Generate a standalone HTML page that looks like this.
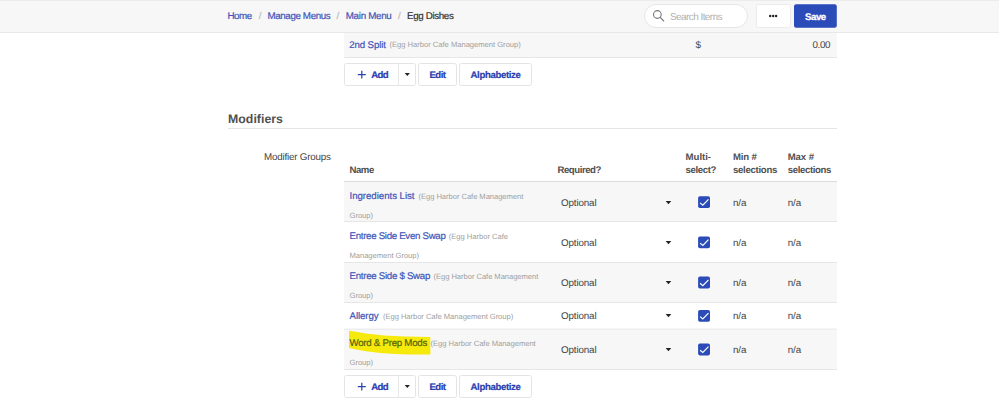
<!DOCTYPE html>
<html><head><meta charset="utf-8">
<style>
*{box-sizing:border-box;margin:0;padding:0}
html,body{width:999px;height:413px;overflow:hidden;background:#fff}
body{font-family:"Liberation Sans",sans-serif;position:relative;color:#444;text-rendering:geometricPrecision}
.a{position:absolute;white-space:nowrap;line-height:1}
.hdr{left:0;top:0;width:999px;height:33px;background:#f7f7f7;border-bottom:1px solid #e8e8e8;border-top:1px solid #ececec}
.bc{font-size:9.8px;top:11.8px;color:#4155b8;-webkit-text-stroke:0.2px currentColor}
.sep{color:#bbb}
.btn{background:#fff;border:1px solid #e4e4e4;border-radius:2.5px}
.bt{font-size:9.6px;font-weight:bold;color:#2b40b0;-webkit-text-stroke:0.2px currentColor}
.lnk{font-size:9.7px;color:#4155b8;-webkit-text-stroke:0.2px currentColor}
.sm{font-size:7.6px;color:#a0a0a0}
.th{font-size:9.6px;font-weight:bold;color:#505050}
.td{font-size:9.8px;color:#444}
.row{left:344px;width:493px;border-bottom:1px solid #e6e6e6}
.g{background:#f7f7f7}
.cb{left:698px}
.car{width:0;height:0;border-left:2.5px solid transparent;border-right:2.5px solid transparent;border-top:3px solid #2a2a2a}
</style></head><body>
<div class="a hdr"></div>
<span class="a bc" id="b1" style="letter-spacing:-0.461px;left:227.5px">Home</span>
<span class="a bc sep" style="left:258.7px">/</span>
<span class="a bc" id="b2" style="letter-spacing:-0.395px;left:267.5px">Manage Menus</span>
<span class="a bc sep" style="left:336.5px">/</span>
<span class="a bc" id="b3" style="letter-spacing:-0.302px;left:345.75px">Main Menu</span>
<span class="a bc sep" style="left:398px">/</span>
<span class="a bc" id="b4" style="letter-spacing:-0.361px;left:407px;color:#333">Egg Dishes</span>

<div class="a" style="left:643.5px;top:4px;width:104px;height:24px;background:#fff;border:1px solid #e6e6e6;border-radius:12px"></div>
<svg class="a" style="left:650px;top:8px" width="16" height="16" viewBox="0 0 16 16"><circle cx="7.35" cy="6.5" r="3.85" fill="none" stroke="#777" stroke-width="1.1"/><path d="M10.1 9.3 L13.7 12.9" stroke="#777" stroke-width="1.2" stroke-linecap="round"/></svg>
<span class="a" id="si" style="letter-spacing:-0.577px;left:670px;top:12.5px;font-size:10px;color:#b0b0b0">Search Items</span>
<div class="a btn" style="left:756px;top:4px;width:35px;height:24px;border-color:#ebebeb"></div>
<svg class="a" style="left:764px;top:10px" width="20" height="12" viewBox="0 0 20 12"><circle cx="6.2" cy="6" r="1.2" fill="#222"/><circle cx="9.15" cy="6" r="1.2" fill="#222"/><circle cx="12.1" cy="6" r="1.2" fill="#222"/></svg>
<svg class="a" style="left:790px;top:0" width="50" height="32"><rect x="4" y="4.3" width="42.8" height="23.5" rx="2.2" fill="#2b4bb8"/></svg>
<span class="a" id="sv" style="letter-spacing:-0.418px;left:805px;top:13.2px;font-size:9.6px;font-weight:bold;color:#fff;-webkit-text-stroke:0.3px #fff">Save</span>

<!-- 2nd split row -->
<div class="a row g" style="top:33px;height:25px"></div>
<span class="a lnk" id="r0" style="letter-spacing:-0.141px;left:349.3px;top:40.5px">2nd Split</span>
<span class="a sm" id="r0s" style="letter-spacing:-0.012px;left:389.5px;top:41.3px">(Egg Harbor Cafe Management Group)</span>
<span class="a td" id="dl" style="letter-spacing:-0.453px;left:695.5px;top:41.1px">$</span>
<span class="a td" id="am" style="letter-spacing:-0.395px;left:812.5px;top:41.1px">0.00</span>

<!-- buttons 1 -->
<div class="a btn" style="left:344px;top:63px;width:72px;height:23px"></div>
<div class="a" style="left:398px;top:63px;width:1px;height:23px;background:#e8e8e8"></div>
<svg class="a" style="left:356px;top:70.0px" width="12" height="12" viewBox="0 0 12 12"><path d="M5.8 0.65 V8.4 M1.8 4.5 H9.8" stroke="#2b44b4" stroke-width="1.25" fill="none"/></svg>
<span class="a bt" id="a1" style="letter-spacing:-0.635px;left:371.3px;top:70.5px">Add</span>
<svg class="a" style="left:400px;top:70.3px" width="16" height="10" viewBox="0 0 16 10"><path d="M4.7 3 L9.9 3 L7.3 6.1 Z" fill="#222"/></svg>
<div class="a btn" style="left:418px;top:63px;width:39px;height:23px"></div>
<span class="a bt" id="e1" style="letter-spacing:-0.531px;left:429.5px;top:70.5px">Edit</span>
<div class="a btn" style="left:459px;top:63px;width:72.5px;height:23px"></div>
<span class="a bt" id="al1" style="letter-spacing:-0.349px;left:470.5px;top:70.5px">Alphabetize</span>

<!-- Modifiers -->
<span class="a" id="mod" style="letter-spacing:0.038px;left:228px;top:113.3px;font-size:12.3px;font-weight:bold;color:#505050">Modifiers</span>
<div class="a" style="left:228px;top:128px;width:609px;height:1px;background:#e4e4e4"></div>
<span class="a td" id="mg" style="letter-spacing:-0.197px;left:264px;top:153px">Modifier Groups</span>

<!-- table header -->
<span class="a th" id="h1" style="letter-spacing:-0.473px;left:349.5px;top:166.1px">Name</span>
<span class="a th" id="h2" style="letter-spacing:-0.427px;left:557.4px;top:166.1px">Required?</span>
<span class="a th" id="h3a" style="letter-spacing:-0.031px;left:685.6px;top:153.1px">Multi-</span>
<span class="a th" id="h3b" style="letter-spacing:-0.382px;left:685.6px;top:166.1px">select?</span>
<span class="a th" id="h4a" style="letter-spacing:-0.147px;left:733px;top:153.1px">Min #</span>
<span class="a th" id="h4b" style="letter-spacing:-0.292px;left:733px;top:166.1px">selections</span>
<span class="a th" id="h5a" style="letter-spacing:-0.094px;left:787.7px;top:153.1px">Max #</span>
<span class="a th" id="h5b" style="letter-spacing:-0.363px;left:787.7px;top:166.1px">selections</span>
<div class="a" style="left:344px;top:180.5px;width:493px;height:1.5px;background:#dcdcdc"></div>

<!-- rows -->
<div class="a row g" style="top:182px;height:40.3px"></div>
<div class="a row" style="top:222.3px;height:40.3px"></div>
<div class="a row g" style="top:262.5px;height:40.3px"></div>
<div class="a row" style="top:302.8px;height:26.5px;border-bottom:0"></div>
<svg class="a" style="left:344px;top:326px" width="493" height="6"><rect x="0" y="2.65" width="493" height="1" fill="#e4e4e4"/></svg>
<div class="a row g" style="top:329.6px;height:40px"></div>

<svg class="a" style="left:340px;top:322px" width="110" height="44" viewBox="340 322 110 44"><path d="M349 330.8 L356 331.8 L366 333.6 L384 335.6 L405 336.4 L430.3 336.9 L430.4 354.6 L410 354.5 L395 354.1 L380 353.1 L366 351.2 L356 349.4 L349 347.9 Z" fill="#f6ea0c"/></svg>

<span class="a lnk" id="r1" style="letter-spacing:-0.044px;left:349.5px;top:192.0px">Ingredients List</span>
<span class="a sm" id="r1s" style="letter-spacing:-0.044px;left:418.5px;top:192.8px">(Egg Harbor Cafe Management</span>
<span class="a sm" id="r1t" style="letter-spacing:-0.023px;left:349.5px;top:212.0px">Group)</span>

<span class="a lnk" id="r2" style="letter-spacing:-0.301px;left:349.5px;top:232.0px">Entree Side Even Swap</span>
<span class="a sm" id="r2s" style="letter-spacing:-0.017px;left:448.8px;top:232.8px">(Egg Harbor Cafe</span>
<span class="a sm" id="r2t" style="letter-spacing:-0.034px;left:349.5px;top:252.0px">Management Group)</span>

<span class="a lnk" id="r3" style="letter-spacing:-0.285px;left:349.5px;top:272.0px">Entree Side $ Swap</span>
<span class="a sm" id="r3s" style="letter-spacing:-0.044px;left:433.5px;top:272.8px">(Egg Harbor Cafe Management</span>
<span class="a sm" id="r3t" style="letter-spacing:-0.023px;left:349.5px;top:292.0px">Group)</span>

<span class="a lnk" id="r4" style="letter-spacing:-0.074px;left:349.5px;top:312.3px">Allergy</span>
<span class="a sm" id="r4s" style="letter-spacing:-0.046px;left:383px;top:313.1px">(Egg Harbor Cafe Management Group)</span>

<span class="a lnk" id="r5" style="letter-spacing:-0.260px;left:349.5px;top:339.0px;color:#55640c">Word &amp; Prep Mods</span>
<span class="a sm" id="r5s" style="letter-spacing:-0.032px;left:430.6px;top:339.8px">(Egg Harbor Cafe Management</span>
<span class="a sm" id="r5t" style="letter-spacing:-0.023px;left:349.5px;top:358.5px">Group)</span>

<!-- columns per row: centers 201.9, 242.4, 282.6, 316, 349.4 -->
<span class="a td" id="o1" style="letter-spacing:-0.125px;left:561px;top:199.1px">Optional</span>
<span class="a td" id="o2" style="letter-spacing:-0.125px;left:561px;top:239.3px">Optional</span>
<span class="a td" id="o3" style="letter-spacing:-0.125px;left:561px;top:278.6px">Optional</span>
<span class="a td" id="o4" style="letter-spacing:-0.125px;left:561px;top:311.9px">Optional</span>
<span class="a td" id="o5" style="letter-spacing:-0.125px;left:561px;top:346.3px">Optional</span>
<svg class="a" style="left:660px;top:197.6px" width="16" height="10" viewBox="0 0 16 10"><path d="M5.6 3 L11.3 3 L8.45 6.2 Z" fill="#222" stroke="#fff" stroke-opacity="0.7" stroke-width="1.4" paint-order="stroke"/></svg>
<svg class="a" style="left:660px;top:237.8px" width="16" height="10" viewBox="0 0 16 10"><path d="M5.6 3 L11.3 3 L8.45 6.2 Z" fill="#222" stroke="#fff" stroke-opacity="0.7" stroke-width="1.4" paint-order="stroke"/></svg>
<svg class="a" style="left:660px;top:278.0px" width="16" height="10" viewBox="0 0 16 10"><path d="M5.6 3 L11.3 3 L8.45 6.2 Z" fill="#222" stroke="#fff" stroke-opacity="0.7" stroke-width="1.4" paint-order="stroke"/></svg>
<svg class="a" style="left:660px;top:311.4px" width="16" height="10" viewBox="0 0 16 10"><path d="M5.6 3 L11.3 3 L8.45 6.2 Z" fill="#222" stroke="#fff" stroke-opacity="0.7" stroke-width="1.4" paint-order="stroke"/></svg>
<svg class="a" style="left:660px;top:344.8px" width="16" height="10" viewBox="0 0 16 10"><path d="M5.6 3 L11.3 3 L8.45 6.2 Z" fill="#222" stroke="#fff" stroke-opacity="0.7" stroke-width="1.4" paint-order="stroke"/></svg>

<svg class="a" style="left:697px;top:195px" width="14" height="15" viewBox="0 0 14 15"><g transform="translate(1.1 1.20)"><rect width="11.9" height="11.9" rx="1.8" fill="#2b4bb8"/><path d="M2.0 6.7 L4.7 9.0 L10.4 3.2" fill="none" stroke="#fff" stroke-width="1.2"/></g></svg>
<svg class="a" style="left:697px;top:235px" width="14" height="15" viewBox="0 0 14 15"><g transform="translate(1.1 1.40)"><rect width="11.9" height="11.9" rx="1.8" fill="#2b4bb8"/><path d="M2.0 6.7 L4.7 9.0 L10.4 3.2" fill="none" stroke="#fff" stroke-width="1.2"/></g></svg>
<svg class="a" style="left:697px;top:275px" width="14" height="15" viewBox="0 0 14 15"><g transform="translate(1.1 1.60)"><rect width="11.9" height="11.9" rx="1.8" fill="#2b4bb8"/><path d="M2.0 6.7 L4.7 9.0 L10.4 3.2" fill="none" stroke="#fff" stroke-width="1.2"/></g></svg>
<svg class="a" style="left:697px;top:308px" width="14" height="15" viewBox="0 0 14 15"><g transform="translate(1.1 1.90)"><rect width="11.9" height="11.9" rx="1.8" fill="#2b4bb8"/><path d="M2.0 6.7 L4.7 9.0 L10.4 3.2" fill="none" stroke="#fff" stroke-width="1.2"/></g></svg>
<svg class="a" style="left:697px;top:342px" width="14" height="15" viewBox="0 0 14 15"><g transform="translate(1.1 1.50)"><rect width="11.9" height="11.9" rx="1.8" fill="#2b4bb8"/><path d="M2.0 6.7 L4.7 9.0 L10.4 3.2" fill="none" stroke="#fff" stroke-width="1.2"/></g></svg>

<span class="a td" id="n1" style="letter-spacing:-0.109px;left:733px;top:199.1px">n/a</span><span class="a td" id="m1" style="letter-spacing:-0.109px;left:787.7px;top:199.1px">n/a</span>
<span class="a td" id="n2" style="letter-spacing:-0.109px;left:733px;top:239.3px">n/a</span><span class="a td" id="m2" style="letter-spacing:-0.109px;left:787.7px;top:239.3px">n/a</span>
<span class="a td" id="n3" style="letter-spacing:-0.109px;left:733px;top:278.6px">n/a</span><span class="a td" id="m3" style="letter-spacing:-0.109px;left:787.7px;top:278.6px">n/a</span>
<span class="a td" id="n4" style="letter-spacing:-0.109px;left:733px;top:311.9px">n/a</span><span class="a td" id="m4" style="letter-spacing:-0.109px;left:787.7px;top:311.9px">n/a</span>
<span class="a td" id="n5" style="letter-spacing:-0.109px;left:733px;top:346.3px">n/a</span><span class="a td" id="m5" style="letter-spacing:-0.109px;left:787.7px;top:346.3px">n/a</span>

<!-- buttons 2 -->
<div class="a btn" style="left:344px;top:375px;width:72px;height:23px"></div>
<div class="a" style="left:398px;top:375px;width:1px;height:23px;background:#e8e8e8"></div>
<svg class="a" style="left:356px;top:382.0px" width="12" height="12" viewBox="0 0 12 12"><path d="M5.8 0.65 V8.4 M1.8 4.5 H9.8" stroke="#2b44b4" stroke-width="1.25" fill="none"/></svg>
<span class="a bt" id="a2" style="letter-spacing:-0.635px;left:371.3px;top:382.5px">Add</span>
<svg class="a" style="left:400px;top:382.3px" width="16" height="10" viewBox="0 0 16 10"><path d="M4.7 3 L9.9 3 L7.3 6.1 Z" fill="#222"/></svg>
<div class="a btn" style="left:418px;top:375px;width:39px;height:23px"></div>
<span class="a bt" id="e2" style="letter-spacing:-0.531px;left:429.5px;top:382.5px">Edit</span>
<div class="a btn" style="left:459px;top:375px;width:72.5px;height:23px"></div>
<span class="a bt" id="al2" style="letter-spacing:-0.349px;left:470.5px;top:382.5px">Alphabetize</span>
</body></html>
